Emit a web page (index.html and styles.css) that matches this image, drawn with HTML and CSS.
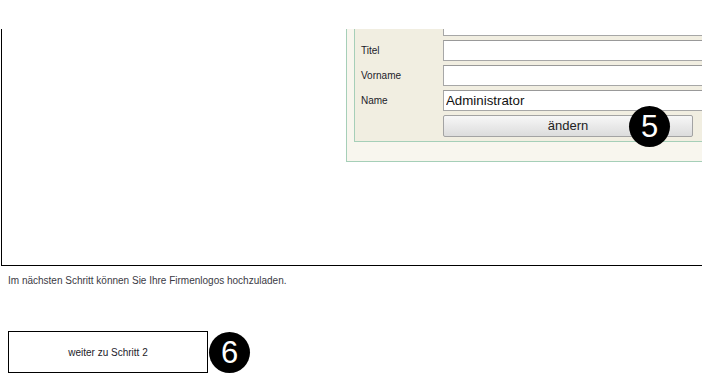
FILE: index.html
```html
<!DOCTYPE html>
<html lang="de">
    <head>
        <meta charset="UTF-8">
        <meta name="viewport" content="width=device-width, initial-scale=1.0">
        <title>Einrichtung - Schritt 1</title>

        <link rel="stylesheet" href="styles.css">

    </head>
    <body>
        <div class="frame">
            <div class="panel">
                <form class="panel-inner" id="profile">
                    <div class="row">
                        <span class="label"></span>
                        <input class="field" type="text" name="email">
                    </div>
                    <div class="row">
                        <span class="label">Titel</span>
                        <input class="field" type="text" name="titel">
                    </div>
                    <div class="row">
                        <span class="label">Vorname</span>
                        <input class="field" type="text" name="vorname">
                    </div>
                    <div class="row">
                        <span class="label">Name</span>
                        <input class="field" type="text" name="name" value="Administrator">
                    </div>
                    <div class="row">
                        <span class="label"></span>
                        <button class="btn-change" type="button">ändern</button>
                        <span class="badge badge-over">5</span>
                    </div>
                </form>
            </div>
        </div>

        <p class="hint">Im nächsten Schritt können Sie Ihre Firmenlogos hochzuladen.</p>

        <div class="next">
            <button class="btn-next" type="button">weiter zu Schritt 2</button>
            <span class="badge">6</span>
        </div>
    </body>
</html>
```

FILE: styles.css
```css
html, body {
    margin: 0;
    overflow: hidden;
    background: #fff;
    font-family: "Liberation Sans", Arial, sans-serif;
}

.frame {
    margin: 29px 0 0 1px;
    height: 236px;
    border-left: 1px solid #000;
    border-bottom: 1px solid #000;
    overflow: hidden;
}

/* settings box, cut off at the top and right */
.panel {
    margin: -40px 0 0 344px;
    width: 420px;
    padding: 7px 0 19px 7px;
    border: 1px solid #a6cfb8;
    background: #f8f6ee;
}

.panel-inner {
    display: flex;
    flex-direction: column;
    gap: 4px;
    margin: 0;
    padding: 17px 0 5px 6px;
    border: 1px solid #a6cfb8;
    background: #f1eee1;
}

.row {
    position: relative;
    display: flex;
    align-items: center;
    height: 21px;
}

.label {
    width: 82px;
    flex: none;
    font-size: 10px;
    color: #1c1c2a;
}

.field {
    box-sizing: border-box;
    width: 320px;
    height: 21px;
    margin: 0;
    padding: 0 2px;
    border: 1px solid #a7a7a7;
    border-top-color: #999;
    background: #fff;
    font-family: "Liberation Sans", Arial, sans-serif;
    font-size: 13.3px;
    color: #111;
}

.btn-change {
    box-sizing: border-box;
    width: 250px;
    height: 22px;
    margin: 0;
    padding: 0;
    border: 1px solid #a3a3a3;
    border-radius: 2px;
    background: linear-gradient(#f7f7f7, #dcdcdc);
    font-family: "Liberation Sans", Arial, sans-serif;
    font-size: 13px;
    color: #222;
}

.badge {
    display: flex;
    align-items: center;
    justify-content: center;
    width: 41px;
    height: 41px;
    border-radius: 50%;
    background: #000;
    color: #fff;
    font-size: 31px;
    line-height: 1;
}

.badge-over {
    position: absolute;
    left: 268px;
    top: -9px;
}

.hint {
    margin: 9px 0 0 8px;
    font-size: 10px;
    color: #3a3a44;
}

.next {
    display: flex;
    align-items: center;
    gap: 1px;
    margin: 45px 0 0 8px;
}

.btn-next {
    box-sizing: border-box;
    width: 200px;
    height: 42px;
    margin: 0;
    border: 1px solid #000;
    background: #fff;
    font-family: "Liberation Sans", Arial, sans-serif;
    font-size: 10px;
    color: #1c1c2a;
}
```
